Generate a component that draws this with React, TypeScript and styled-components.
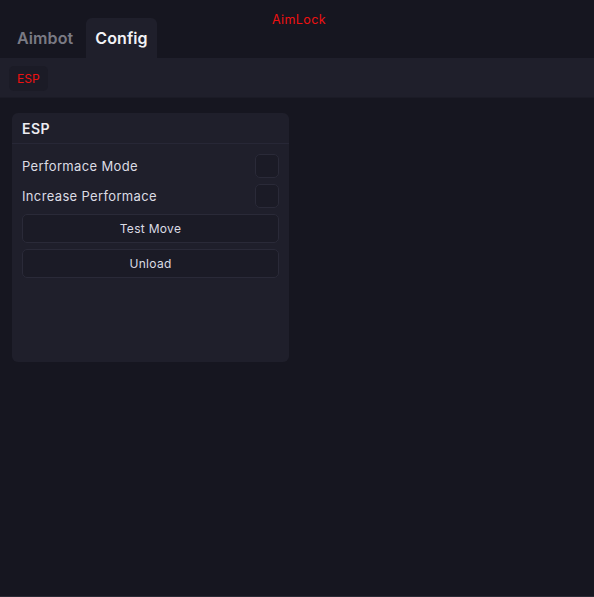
import React from "react";
import styled, { createGlobalStyle } from "styled-components";

const Global = createGlobalStyle`
  html, body { margin: 0; padding: 0; background: #161620; }
  * { box-sizing: border-box; }
  body { font-family: Inter, "Noto Sans", sans-serif; }
`;

const Window = styled.div`
  width: 594px;
  height: 597px;
  background: #161620;
  display: flex;
  flex-direction: column;
  border-bottom: 1px solid #2b2b36;
`;

const Header = styled.div`
  height: 58px;
  display: grid;
  grid-template-areas: "stack";
`;

const Title = styled.div`
  grid-area: stack;
  justify-self: center;
  align-self: start;
  margin-top: 12px;
  padding-left: 4px;
  color: #ee1111;
  font-size: 12.5px;
  letter-spacing: 0.4px;
  line-height: 15px;
`;

const Tabs = styled.div`
  grid-area: stack;
  align-self: end;
  display: flex;
  gap: 4px;
  padding-left: 8px;
`;

const Tab = styled.div<{ $active?: boolean }>`
  height: 40px;
  padding: 0 9px;
  display: flex;
  align-items: center;
  border-radius: 6px 6px 0 0;
  font-size: 16px;
  font-weight: 600;
  letter-spacing: 0.1px;
  color: ${(p) => (p.$active ? "#f2f2f6" : "#7a7a84")};
  background: ${(p) => (p.$active ? "#1f1f2b" : "transparent")};
`;

const SubBar = styled.div`
  height: 40px;
  background: #1f1f2b;
  padding: 8px 9px 7px;
  display: flex;
  border-bottom: 1px solid #1b1b26;
`;

const SubTab = styled.div`
  height: 25px;
  padding: 0 8px;
  display: flex;
  align-items: center;
  border-radius: 5px;
  background: #1b1b26;
  color: #ee1111;
  font-size: 12px;
`;

const Content = styled.div`
  padding: 15px 12px;
`;

const Card = styled.div`
  width: 277px;
  height: 249px;
  background: #1f1f2b;
  border-radius: 6px;
  display: flex;
  flex-direction: column;
`;

const CardHeader = styled.div`
  height: 31px;
  padding: 0 10px;
  display: flex;
  align-items: center;
  border-bottom: 1px solid #272736;
  color: #ececf2;
  font-size: 14px;
  font-weight: 600;
  letter-spacing: 0.5px;
`;

const CardBody = styled.div`
  padding: 10px 10px;
  display: flex;
  flex-direction: column;
  gap: 6px;
`;

const Row = styled.div`
  height: 24px;
  display: flex;
  align-items: center;
  justify-content: space-between;
  color: #dcdce4;
  font-size: 13px;
  letter-spacing: 0.35px;
`;

const Check = styled.div`
  width: 24px;
  height: 24px;
  border-radius: 5px;
  background: #1b1b26;
  border: 1px solid #2a2a38;
`;

const Button = styled.div`
  height: 29px;
  display: flex;
  align-items: center;
  justify-content: center;
  border-radius: 5px;
  background: #1b1b26;
  border: 1px solid #2a2a38;
  color: #dcdce4;
  font-size: 12px;
  letter-spacing: 0.3px;
`;

export default function App() {
  return (
    <Window>
      <Global />
      <Header>
        <Title>AimLock</Title>
        <Tabs>
          <Tab>Aimbot</Tab>
          <Tab $active>Config</Tab>
        </Tabs>
      </Header>
      <SubBar>
        <SubTab>ESP</SubTab>
      </SubBar>
      <Content>
        <Card>
          <CardHeader>ESP</CardHeader>
          <CardBody>
            <Row>
              Performace Mode
              <Check />
            </Row>
            <Row>
              Increase Performace
              <Check />
            </Row>
            <Button>Test Move</Button>
            <Button>Unload</Button>
          </CardBody>
        </Card>
      </Content>
    </Window>
  );
}
